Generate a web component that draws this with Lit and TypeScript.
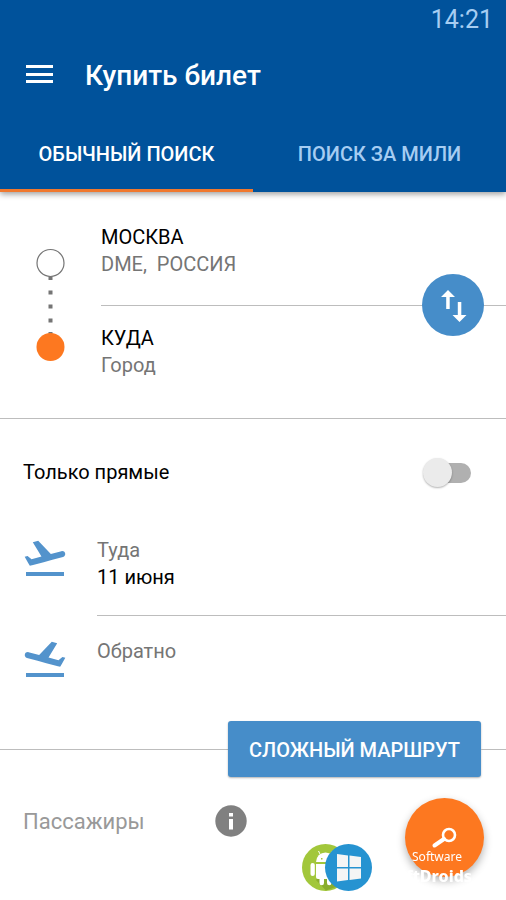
import { LitElement, html, css } from "lit";
import { customElement, state } from "lit/decorators.js";

const PLANE =
  "M2.5 19h19v2h-19zm19.57-9.36c-.21-.8-1.04-1.28-1.84-1.06L14.92 10 8.6 3.4 5.9 4.1l4.33 7.15-4.97 1.33-1.97-1.54-1.45.39 1.82 3.16.77 1.33 1.6-.43 5.31-1.42 4.35-1.16L21 11.49c.81-.23 1.28-1.05 1.07-1.85z";

@customElement("app-root")
export class AppRoot extends LitElement {
  @state() private direct = false;
  @state() private tab = 0;

  static styles = css`
    :host {
      display: block;
      min-height: 100vh;
      background: #fff;
      color: #000;
      font: 20px/27px Roboto, "Noto Sans", sans-serif;
      overflow: hidden;
    }
    * { box-sizing: border-box; }
    svg { display: block; }
    button {
      border: 0;
      padding: 0;
      margin: 0;
      background: none;
      color: inherit;
      font: inherit;
      cursor: pointer;
    }

    header {
      position: relative;
      background: #00529b;
      color: #fff;
      box-shadow: 0 2px 6px rgba(0, 0, 0, 0.4);
    }
    .status {
      height: 38px;
      padding-right: 13px;
      text-align: right;
      font-size: 25px;
      line-height: 40px;
      color: #a6cdf2;
    }
    .bar { display: flex; align-items: center; gap: 31px; height: 75px; padding-left: 26px; }
    .bar h1 { margin: 0; font-size: 28px; line-height: 32px; font-weight: 500; }
    .tabs { display: grid; grid-template-columns: 1fr 1fr; }
    .tab {
      height: 79px;
      padding-top: 6px;
      border-bottom: 3px solid transparent;
      font-weight: 500;
      color: #a6cdf2;
    }
    .tab.on { color: #fff; border-color: #f0782e; }

    .route { display: grid; grid-template-columns: 101px 1fr; border-bottom: 1px solid #bdbdbd; }
    .track { padding: 56px 0 0 36px; }
    .places { position: relative; }
    .place {
      display: flex;
      flex-direction: column;
      align-items: flex-start;
      width: 100%;
      height: 112px;
      padding-top: 19px;
    }
    .place:first-child { height: 114px; padding-top: 32px; border-bottom: 1px solid #bdbdbd; }
    .muted { color: #757575; }
    .swap {
      position: absolute;
      right: 22px;
      top: 82px;
      border-radius: 50%;
      background: #468dc9;
    }

    .direct {
      display: flex;
      align-items: center;
      justify-content: space-between;
      height: 107px;
      padding: 0 34px 0 23px;
    }
    .switch { appearance: none; position: relative; width: 50px; height: 30px; margin: 0; cursor: pointer; }
    .switch::before {
      content: "";
      position: absolute;
      inset: 5px 1px 5px 8px;
      border-radius: 10px;
      background: #b0b0b0;
    }
    .switch::after {
      content: "";
      position: absolute;
      left: 1px;
      top: 0;
      width: 29px;
      height: 29px;
      border-radius: 50%;
      background: #ebebeb;
      box-shadow: 0 1px 2px rgba(0, 0, 0, 0.3);
    }
    .switch:checked::after { left: 20px; background: #468dc9; }

    .date { display: grid; grid-template-columns: 97px 1fr; width: 100%; text-align: left; }
    .date svg { margin: 8px 0 0 21px; }
    .detail { display: flex; flex-direction: column; padding-top: 11px; height: 90px; border-bottom: 1px solid #bdbdbd; }
    .date + .date { padding-top: 11px; }
    .date + .date .detail { border: 0; }
    .flip { transform: scaleX(-1); }

    .more { display: flex; align-items: center; padding-top: 4px; }
    .more::before { content: ""; flex: 1; height: 1px; background: #bdbdbd; }
    .more::after { content: ""; width: 25px; height: 1px; background: #bdbdbd; }
    .complex {
      height: 56px;
      padding: 2px 21px 0;
      border-radius: 3px;
      background: #468dc9;
      color: #fff;
      font-weight: 500;
      box-shadow: 0 1px 2px rgba(0, 0, 0, 0.3);
    }

    .pax {
      display: flex;
      align-items: center;
      gap: 70px;
      height: 88px;
      padding-left: 23px;
      font-size: 22px;
      color: #999;
    }
    .fab {
      position: fixed;
      right: 22px;
      bottom: 23px;
      border-radius: 50%;
      background: #fd7820;
      box-shadow: 0 4px 8px rgba(0, 0, 0, 0.3);
    }
    .badge {
      position: fixed;
      right: 34px;
      bottom: 9px;
      display: flex;
      align-items: center;
      color: #fff;
      font-family: "Noto Sans", "Open Sans", sans-serif;
      pointer-events: none;
    }
    .words { width: 100px; text-align: right; }
    .words span { display: block; padding-right: 10px; font-size: 12px; line-height: 17px; }
    .words b { display: block; font-size: 16px; line-height: 22px; font-weight: 800; }
  `;

  private renderTab(label: string, index: number) {
    return html`<button
      class="tab ${this.tab === index ? "on" : ""}"
      @click=${() => (this.tab = index)}
    >${label}</button>`;
  }

  private renderDate(label: string, value: string, back: boolean) {
    return html`<button class="date">
      <svg class=${back ? "flip" : ""} width="48" height="48" viewBox="0 0 24 24" fill="#5393cc">
        <path d=${PLANE} />
      </svg>
      <span class="detail"><span class="muted">${label}</span><span>${value}</span></span>
    </button>`;
  }

  render() {
    return html`
      <header>
        <div class="status">14:21</div>
        <div class="bar">
          <button aria-label="Меню">
            <svg width="28" height="24" fill="#fff"><path d="M0 1h27v3H0zM0 9h27v3H0zM0 16h27v3H0z" /></svg>
          </button>
          <h1>Купить билет</h1>
        </div>
        <nav class="tabs">${this.renderTab("ОБЫЧНЫЙ ПОИСК", 0)}${this.renderTab("ПОИСК ЗА МИЛИ", 1)}</nav>
      </header>

      <section class="route">
        <div class="track">
          <svg width="30" height="115">
            <path d="M12.500 28h4v4h-4zM12.500 42.500h4v4h-4zM12.500 56.500h4v4h-4zM12.500 70.500h4v4h-4zM12.500 84h4v4h-4z" fill="#757575" />
            <circle cx="14.5" cy="15" r="13.5" fill="#fff" stroke="#757575" stroke-width="1.2" />
            <circle cx="14.5" cy="99" r="14" fill="#fd7820" />
          </svg>
        </div>
        <div class="places">
          <button class="place"><span>МОСКВА</span><span class="muted">DME,&nbsp; РОССИЯ</span></button>
          <button class="place"><span>КУДА</span><span class="muted">Город</span></button>
          <button class="swap" aria-label="Поменять местами">
            <svg width="62" height="62" fill="#fff">
              <path d="M26 16l7 7h-5.3v12h-3.5v-12H19zM37.5 48l-7-7h5.3v-13h3.5v13h5.2z" />
            </svg>
          </button>
        </div>
      </section>

      <label class="direct">
        Только прямые
        <input class="switch" type="checkbox" .checked=${this.direct} @change=${() => (this.direct = !this.direct)} />
      </label>

      ${this.renderDate("Туда", "11 июня", false)}${this.renderDate("Обратно", "", true)}

      <div class="more"><button class="complex">СЛОЖНЫЙ МАРШРУТ</button></div>

      <div class="pax">
        Пассажиры
        <button aria-label="Информация">
          <svg width="32" height="32">
            <circle cx="16" cy="16" r="15.7" fill="#808080" />
            <path d="M14 8h4v3.5h-4zM14 14h4v10.5h-4z" fill="#fff" />
          </svg>
        </button>
      </div>

      <button class="fab" aria-label="Найти">
        <svg width="79" height="79" fill="none" stroke="#fff">
          <circle cx="44" cy="37" r="6" stroke-width="2.6" />
          <path d="M39 41L29.5 47.5" stroke-width="4" stroke-linecap="round" />
        </svg>
      </button>

      <div class="badge">
        <svg width="70" height="47" viewBox="0 0 70 47">
          <circle cx="23.5" cy="23.5" r="23.5" fill="#a2c73b" />
          <path d="M14 36l10 10.5 14-5V20L30 12z" fill="#8aad2c" />
          <g fill="#fff">
            <path d="M14 18a9.5 9.5 0 0 1 19 0z" />
            <path d="M14 20h19v13a2 2 0 0 1-2 2h-1.5v4a2 2 0 0 1-4.5 0v-4h-3v4a2 2 0 0 1-4.5 0v-4H16a2 2 0 0 1-2-2z" />
            <rect x="8.5" y="19" width="4.3" height="13" rx="2.1" />
            <path d="M18.5 11l-2-4M28.5 11l2-4" stroke="#fff" />
          </g>
          <path d="M19 14h1.5v1.5H19zM26 14h1.5v1.5H26z" fill="#a2c73b" />
          <circle cx="46.5" cy="23.5" r="23.5" fill="#2693d1" />
          <path
            d="M35 10l11 1.5v11.5H35zM47.5 11.5L59 13v10H47.5zM35 24.5h11V36L35 37.5zM47.5 24.5H59V34.5L47.5 36z"
            fill="#f5f5f5"
          />
        </svg>
        <div class="words"><span>Software</span><b>SoftDroids</b></div>
      </div>
    `;
  }
}
